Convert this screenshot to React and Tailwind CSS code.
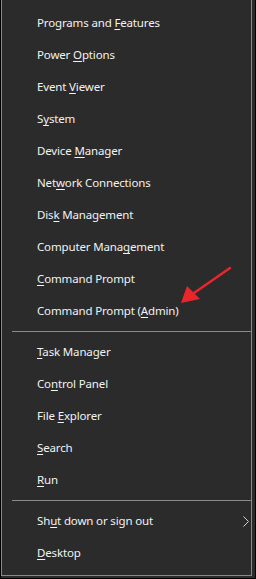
import React from 'react';

// Win+X quick link menu (dark)
const groups = [
  [
    ['Programs and ', 'F', 'eatures'],
    ['Power ', 'O', 'ptions'],
    ['Event ', 'V', 'iewer'],
    ['S', 'y', 'stem'],
    ['Device ', 'M', 'anager'],
    ['Net', 'w', 'ork Connections'],
    ['Dis', 'k', ' Management'],
    ['Computer Mana', 'g', 'ement'],
    ['', 'C', 'ommand Prompt'],
    ['Command Prompt (', 'A', 'dmin)'],
  ],
  [
    ['', 'T', 'ask Manager'],
    ['Co', 'n', 'trol Panel'],
    ['File ', 'E', 'xplorer'],
    ['', 'S', 'earch'],
    ['', 'R', 'un'],
  ],
  [
    ['Sh', 'u', 't down or sign out', true],
    ['', 'D', 'esktop'],
  ],
];

const Item = ({ pre, key_, post, sub }) => (
  <div className="h-[32px] flex items-center pl-[35px] pr-[2px] text-[11.5px] tracking-[-0.15px] text-[#f2f2f2] whitespace-nowrap">
    <span>
      {pre}
      <span className="underline underline-offset-2">{key_}</span>
      {post}
    </span>
    {sub && (
      <svg className="ml-auto" width="6" height="11" viewBox="0 0 6 11">
        <path d="M0.5 0.5 L5.5 5.5 L0.5 10.5" fill="none" stroke="#d0d0d0" strokeWidth="1" />
      </svg>
    )}
  </div>
);

export default function App() {
  return (
    <div
      className="relative w-[256px] h-[579px] bg-[#2b2b2b] border-l border-r border-b border-black overflow-hidden"
      style={{ fontFamily: '"Noto Sans", "Open Sans", sans-serif' }}
    >
      <div className="h-[576px] border-l border-r border-b border-[#8a8a8a] mr-[3px] pt-[7px] flex flex-col">
        {groups.map((g, gi) => (
          <div key={gi}>
            {gi > 0 && (
              <div className="pt-[4px] pb-[4px] pl-[10px]">
                <div className="h-px bg-[#8a8a8a]" />
              </div>
            )}
            {g.map((it, i) => (
              <Item key={i} pre={it[0]} key_={it[1]} post={it[2]} sub={it[3]} />
            ))}
          </div>
        ))}
      </div>
      <svg className="absolute left-0 top-0" width="256" height="579" viewBox="0 0 256 579">
        <line x1="229" y1="268" x2="193" y2="293" stroke="#e8262c" strokeWidth="2.5" strokeLinecap="round" />
        <polygon points="180,303 186,286 199,299" fill="#e8262c" />
      </svg>
    </div>
  );
}
